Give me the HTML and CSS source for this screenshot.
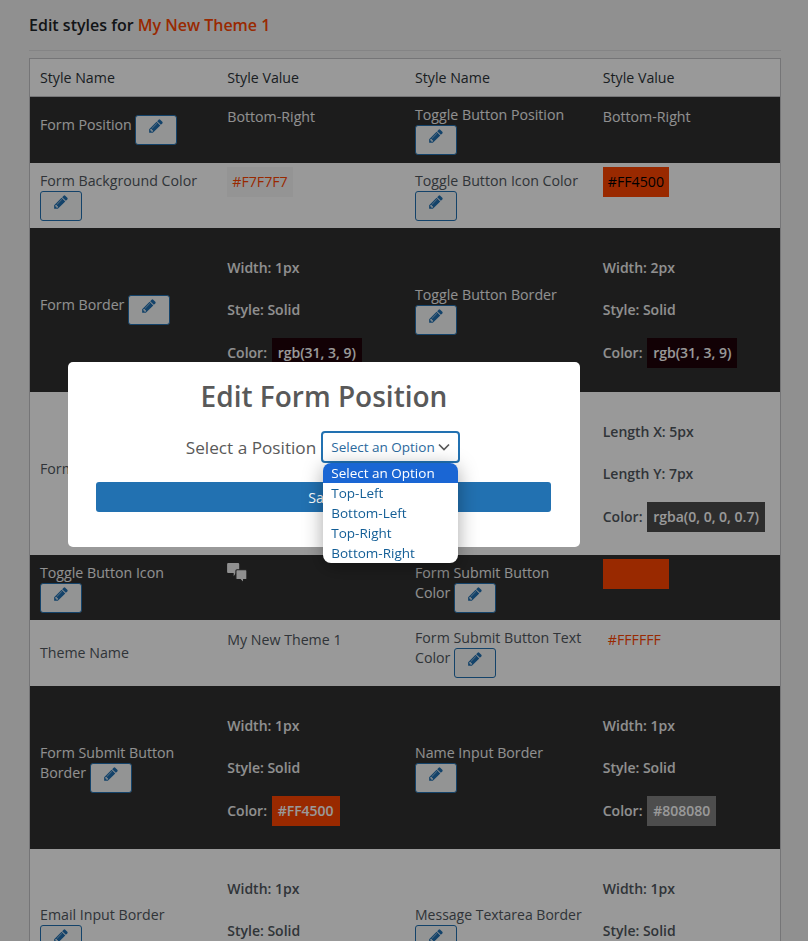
FILE: index.html
```html
<!DOCTYPE html>
<html lang="en">
<head>
    <meta charset="UTF-8">
    <meta name="viewport" content="width=device-width, initial-scale=1.0">
    <link rel="stylesheet" href="styles.css">
    <title>Edit styles</title>
</head>
<body>
    <svg class="defs" width="0" height="0">
        <symbol id="pencil" viewBox="0 0 1792 1792"><path d="M491 1536l91-91-235-235-91 91v107h128v128h107zm523-928q0-22-22-22-10 0-17 7l-542 542q-7 7-7 17 0 22 22 22 10 0 17-7l542-542q7-7 7-17zm-54-192l416 416-832 832h-416v-416zm683 96q0 53-37 90l-166 166-416-416 166-165q36-38 90-38 53 0 91 38l235 234q37 39 37 91z"/></symbol>
    </svg>
    <div class="page">
        <h2 class="pageTitle">Edit styles for <span class="themeName">My New Theme 1</span></h2>
        <hr class="rule">
        <table class="styleTable">
            <thead>
                <tr><th>Style Name</th><th>Style Value</th><th>Style Name</th><th>Style Value</th></tr>
            </thead>
            <tbody>
                <tr class="dark r66">
                    <td class="name">Form Position <a class="editBtn"><svg><use href="#pencil"/></svg></a></td>
                    <td class="val">Bottom-Right</td>
                    <td class="name">Toggle Button Position <a class="editBtn"><svg><use href="#pencil"/></svg></a></td>
                    <td class="val">Bottom-Right</td>
                </tr>
                <tr class="r65">
                    <td class="name">Form Background Color <a class="editBtn"><svg><use href="#pencil"/></svg></a></td>
                    <td class="val"><span class="chip chipPale">#F7F7F7</span></td>
                    <td class="name">Toggle Button Icon Color <a class="editBtn"><svg><use href="#pencil"/></svg></a></td>
                    <td class="val"><span class="chip chipOrange">#FF4500</span></td>
                </tr>
                <tr class="dark r164">
                    <td class="name">Form Border <a class="editBtn"><svg><use href="#pencil"/></svg></a></td>
                    <td class="val multi">
                        <p>Width: 1px</p>
                        <p>Style: Solid</p>
                        <p>Color: <span class="chip chipNight">rgb(31, 3, 9)</span></p>
                    </td>
                    <td class="name">Toggle Button Border <a class="editBtn"><svg><use href="#pencil"/></svg></a></td>
                    <td class="val multi">
                        <p>Width: 2px</p>
                        <p>Style: Solid</p>
                        <p>Color: <span class="chip chipNight">rgb(31, 3, 9)</span></p>
                    </td>
                </tr>
                <tr class="r163">
                    <td class="name">Form Shadow <a class="editBtn"><svg><use href="#pencil"/></svg></a></td>
                    <td class="val multi">
                        <p>Length X: 5px</p>
                        <p>Length Y: 7px</p>
                        <p>Color: <span class="chip chipShade">rgba(0, 0, 0, 0.7)</span></p>
                    </td>
                    <td class="name">Toggle Button Shadow <a class="editBtn"><svg><use href="#pencil"/></svg></a></td>
                    <td class="val multi">
                        <p>Length X: 5px</p>
                        <p>Length Y: 7px</p>
                        <p>Color: <span class="chip chipShade">rgba(0, 0, 0, 0.7)</span></p>
                    </td>
                </tr>
                <tr class="dark r65">
                    <td class="name">Toggle Button Icon <a class="editBtn"><svg><use href="#pencil"/></svg></a></td>
                    <td class="val">
                        <svg class="chatIcon" viewBox="0 0 20 20">
                            <path d="M2 1h9a1 1 0 0 1 1 1v7a1 1 0 0 1-1 1H9l-2 3V10H2a1 1 0 0 1-1-1V2a1 1 0 0 1 1-1z"/>
                            <path class="chatFront" d="M10 7h8a1 1 0 0 1 1 1v7a1 1 0 0 1-1 1h-2v3l-3-3h-3a1 1 0 0 1-1-1V8a1 1 0 0 1 1-1z"/>
                        </svg>
                    </td>
                    <td class="name">Form Submit Button Color <a class="editBtn"><svg><use href="#pencil"/></svg></a></td>
                    <td class="val"><span class="chip chipOrange chipEmpty">#FF4500</span></td>
                </tr>
                <tr class="r66">
                    <td class="name">Theme Name</td>
                    <td class="val">My New Theme 1</td>
                    <td class="name">Form Submit Button Text Color <a class="editBtn"><svg><use href="#pencil"/></svg></a></td>
                    <td class="val"><span class="chip chipWhite">#FFFFFF</span></td>
                </tr>
                <tr class="dark r163">
                    <td class="name">Form Submit Button Border <a class="editBtn"><svg><use href="#pencil"/></svg></a></td>
                    <td class="val multi">
                        <p>Width: 1px</p>
                        <p>Style: Solid</p>
                        <p>Color: <span class="chip chipOrange">#FF4500</span></p>
                    </td>
                    <td class="name">Name Input Border <a class="editBtn"><svg><use href="#pencil"/></svg></a></td>
                    <td class="val multi">
                        <p>Width: 1px</p>
                        <p>Style: Solid</p>
                        <p>Color: <span class="chip chipGrey">#808080</span></p>
                    </td>
                </tr>
                <tr class="r163">
                    <td class="name">Email Input Border <a class="editBtn"><svg><use href="#pencil"/></svg></a></td>
                    <td class="val multi">
                        <p>Width: 1px</p>
                        <p>Style: Solid</p>
                        <p>Color: <span class="chip chipGrey">#808080</span></p>
                    </td>
                    <td class="name nameLong">Message Textarea Border <a class="editBtn"><svg><use href="#pencil"/></svg></a></td>
                    <td class="val multi">
                        <p>Width: 1px</p>
                        <p>Style: Solid</p>
                        <p>Color: <span class="chip chipGrey">#808080</span></p>
                    </td>
                </tr>
            </tbody>
        </table>
    </div>

    <div class="backdrop"></div>
    <div class="modal">
        <h2 class="modalTitle">Edit Form Position</h2>
        <div class="field">
            <label class="fieldLabel">Select a Position</label>
            <div class="selectWrap">
                <div class="selectBox">
                    <span>Select an Option</span>
                    <svg class="chevron" viewBox="0 0 12 8"><path d="M1 1.5l5 5 5-5"/></svg>
                </div>
                <ul class="optionList">
                    <li class="active">Select an Option</li>
                    <li>Top-Left</li>
                    <li>Bottom-Left</li>
                    <li>Top-Right</li>
                    <li>Bottom-Right</li>
                </ul>
            </div>
        </div>
        <button class="saveBtn">Save</button>
    </div>
</body>
</html>
```

FILE: styles.css
```css
html,body{margin:0;height:100%;overflow:hidden}
body{background:#f0f0f1;color:#50575e;font-family:"Open Sans","Noto Sans",sans-serif;font-size:14.2px}
.defs{position:absolute}
.page{padding:0 27px 0 29px}
.pageTitle{margin:0;padding-top:15px;font-size:16px;line-height:20px;font-weight:600;color:#1d2327}
.themeName{color:#ff4500}
.rule{margin:15px 0 7px;border:none;border-top:1px solid #dcdcde}
.styleTable{width:100%;table-layout:fixed;border-collapse:collapse;border:1px solid #c3c4c7;background:#fff}
.styleTable th{height:37px;padding:0 10px;text-align:left;font-weight:400;color:#2c3338;border-bottom:1px solid #c3c4c7}
.styleTable td{padding:8px 10px 7px;line-height:20px;box-sizing:border-box}
.r65 td{height:65px}
.r66 td{height:66px}
.r163 td{height:163px}
.r164 td{height:164px}
.dark td{background:#303030;color:#f0f0f1}
.styleTable td.nameLong{font-size:14px}
.styleTable td.val{vertical-align:top;padding-top:4px;line-height:32px}
.styleTable td.multi{padding-top:25px;font-weight:600;font-size:14px}
.multi p{margin:0 0 12.5px;line-height:30px}
.chip{display:inline-block;padding:0 5px;line-height:30px;vertical-align:top}
.multi .chip{padding:0 6px;margin-left:1px}
.chipPale{background:#f7f7f7;color:#ff4500}
.chipOrange{background:#ff4500;color:#000}
.multi .chipOrange{color:#fff}
.chipEmpty{color:#ff4500;width:56px}
.chipWhite{color:#ff4500;margin-top:1px}
.chipNight{background:rgb(31,3,9);color:#fff}
.chipShade{background:rgba(0,0,0,.7);color:#fff}
.chipGrey{background:#808080;color:#fff}
.chatIcon{width:22px;height:22px;fill:#f0f0f1;margin:3px 0 0 -1px;display:block}
.chatFront{stroke:#303030;stroke-width:1}
.editBtn{display:inline-block;box-sizing:border-box;width:42px;height:30px;overflow:hidden;vertical-align:-15px;background:#f6f7f7;border:1px solid #2271b1;border-radius:3px;text-align:center;color:#2271b1}
.editBtn svg{width:16px;height:16px;fill:currentColor;margin-top:2px}
.backdrop{position:fixed;inset:0;background:rgba(0,0,0,.4)}
.modal{position:fixed;left:68px;top:362px;width:512px;height:185px;box-sizing:border-box;padding:15px 28px 0;background:#fff;border-radius:5px;text-align:center}
.modalTitle{margin:0;font-size:28px;line-height:38px;font-weight:600;color:#595959}
.field{display:flex;justify-content:center;align-items:center;gap:5px;margin:16px 0 19px;padding-right:2px;height:32px}
.fieldLabel{font-size:17.2px;color:#595959}
.selectWrap{position:relative;font-size:13.5px}
.selectBox{display:flex;align-items:center;justify-content:space-between;box-sizing:border-box;width:139px;height:32px;padding:0 8px;border:2px solid #2271b1;border-radius:4px;background:#fff;color:#2c6a9e;white-space:nowrap}
.chevron{width:12px;height:8px;fill:none;stroke:#595959;stroke-width:1.7}
.optionList{position:absolute;z-index:2;left:2px;top:32px;width:135px;margin:0;padding:0;list-style:none;background:#fff;border-radius:8px;overflow:hidden;text-align:left;color:#135e96;box-shadow:0 4px 20px rgba(0,0,0,.35)}
.optionList li{height:20px;line-height:20px;padding-left:8px}
.optionList .active{background:#1a66d4;color:#fff}
.saveBtn{display:block;width:455px;height:30px;padding:0;background:#2271b1;border:none;border-radius:3px;color:#fff;font:inherit}
```
